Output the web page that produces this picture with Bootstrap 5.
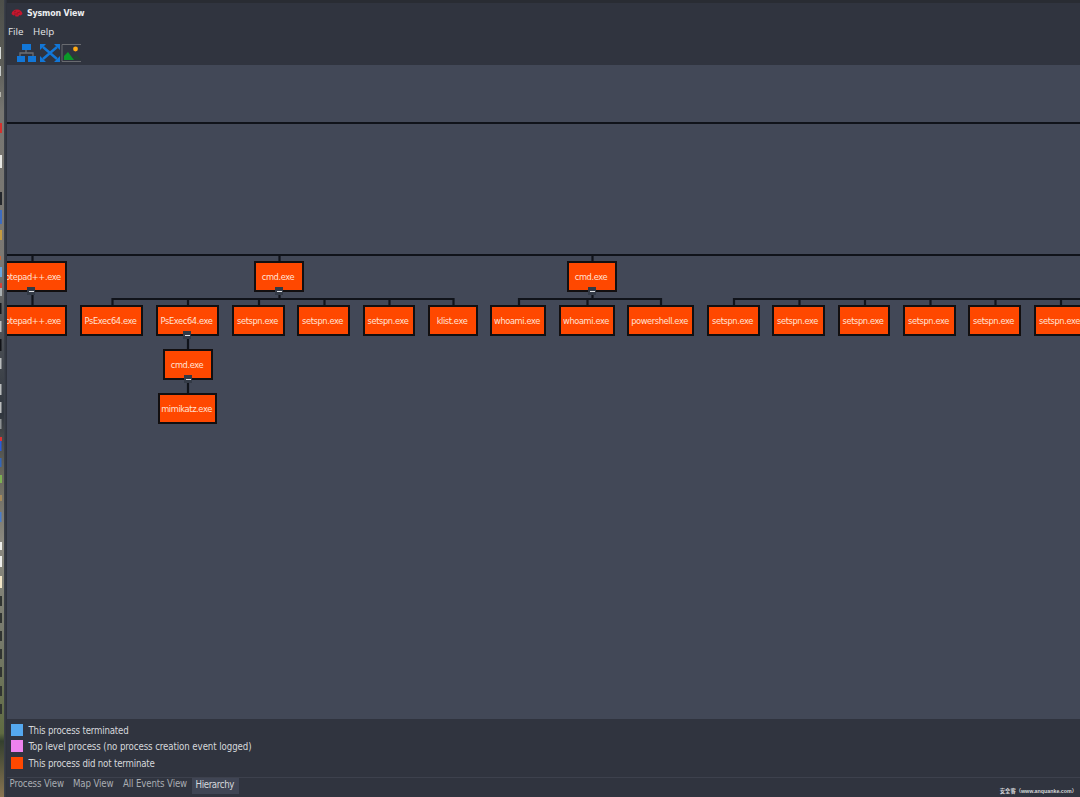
<!DOCTYPE html>
<html lang="en">
<head>
<meta charset="utf-8">
<title>Sysmon View</title>
<link href="https://cdn.jsdelivr.net/npm/bootstrap@5.3.0/dist/css/bootstrap.min.css" rel="stylesheet">
<style>
body{width:1080px;height:797px;background:#30343f;color:#d6d8dc;font-family:"DejaVu Sans Condensed","DejaVu Sans",sans-serif;font-stretch:condensed;font-size:9.6px;line-height:1}
.desk{width:4px;flex:none}
.edge{width:3px;flex:none;background:linear-gradient(90deg,#3d424b,#2b2f39)}
.app-title{height:22px;border-top:3px solid #292c33;font-weight:700;font-size:8.8px;letter-spacing:-.15px;color:#eceef0;padding-left:4px}
.ttl{margin-left:4px;padding-top:2px}
.menus{height:19px;font-family:"Open Sans","Noto Sans",sans-serif;font-size:9.8px;color:#e4e6e9;font-stretch:normal}
.tools{height:24px;padding-left:9px}
.canvas{height:654px;background:#424857}
.node{position:absolute;height:31px;border:2px solid #120f10;background:#ff4800;color:#ffe2d6;font-family:"DejaVu Sans",sans-serif;font-stretch:normal;font-size:8.3px;letter-spacing:-.4px;white-space:nowrap;padding:1px 2px 0 0}
.fold{position:absolute;left:50%;bottom:-5px;width:8px;height:8px;margin-left:-4.5px;background:#333a46}
.fold::after{content:"";position:absolute;left:2px;top:4px;width:5px;height:1px;background:#dfe2e5}
.legend-box{height:58px;padding:4.5px 0 0 4px}
.legend-row{height:16.8px;letter-spacing:-.18px}
.lg{padding-top:2px}
.wide{letter-spacing:-.08px}
.swatch{width:12px;height:12px;margin-right:5.5px}
.bottom-tabs{height:20px;border-top:1px solid #3d414d;color:#a9acb2;font-size:9.6px;letter-spacing:-.12px}
.bottom-tabs .on{background:#404554;color:#d6d8dc;height:16px;letter-spacing:-.35px}
.stamp{font:700 5.3px "Liberation Sans","Noto Sans CJK SC",sans-serif;color:#d5d7da;letter-spacing:0;white-space:nowrap}
</style>
<script src="https://cdn.jsdelivr.net/npm/bootstrap@5.3.0/dist/js/bootstrap.bundle.min.js"></script>
</head>
<body class="d-flex overflow-hidden m-0">
<svg class="desk" width="4" height="797" id="desk">
  <defs><linearGradient id="dg" x1="0" y1="0" x2="0" y2="1">
    <stop offset="0" stop-color="#4d4f4a"/><stop offset=".08" stop-color="#5c5d58"/><stop offset=".14" stop-color="#777671"/><stop offset=".33" stop-color="#7b7873"/><stop offset=".42" stop-color="#4c5056"/><stop offset=".52" stop-color="#30363e"/><stop offset=".59" stop-color="#65645a"/><stop offset=".68" stop-color="#8b8980"/><stop offset=".8" stop-color="#777a6c"/><stop offset=".92" stop-color="#606c42"/><stop offset=".93" stop-color="#34402f"/><stop offset="1" stop-color="#8a7552"/>
  </linearGradient></defs>
  <rect width="4" height="797" fill="url(#dg)"/>
</svg>
<div class="edge"></div>
<main class="flex-grow-1 d-flex flex-column overflow-hidden">
  <header class="app-title d-flex align-items-center">
    <svg width="12" height="8" viewBox="0 0 12 8"><path d="M.5 5C1 2 3 .5 6 .5S11 2 11.5 5L9.500 6.500 8 6 7.500 7.500H4.500L4 6 2.500 6.500Z" fill="#c5162e"/><path d="M3 3L5 2M6 4L9 3M3 5H7" stroke="#811523" stroke-width=".7"/></svg>
    <span class="ttl">Sysmon View</span>
  </header>
  <nav class="menus d-flex align-items-center"><span style="padding-left:1px;width:26px">File</span><span>Help</span></nav>
  <div class="tools d-flex align-items-center">
    <svg width="66" height="20" viewBox="0 0 66 20">
      <path d="M10 7V10M4 13V10H17V13" fill="none" stroke="#6c6f75" stroke-width="1.3"/>
      <path d="M6 1h9v6H6zM1 13h8v6H1zM12 13h8v6h-8z" fill="#1277d8"/>
      <path d="M27 4L41 16M41 4L27 16" stroke="#1277d8" stroke-width="2.4"/>
      <path d="M24 1h6L24 7zM44 1h-6l6 6zM24 19h6l-6-6zM44 19h-6l6-6z" fill="#1277d8"/>
      <path d="M65 1.500H46V18.500H65" fill="none" stroke="#696b70"/>
      <path d="M56 16l4-5 5 6z" fill="#244233"/><path d="M48 17v-4l4-4 6 8z" fill="#0a9a28"/><circle cx="59.500" cy="6" r="2.4" fill="#ffa914"/>
    </svg>
  </div>
  <section class="canvas position-relative overflow-hidden" id="graph">
    <svg class="d-block" width="1073" height="654" viewBox="7 65 1073 654">
      <g fill="none" stroke="#10131a" stroke-width="2.2">
        <path d="M7 123H1080M7 255H1080M32.500 255v50M279.500 255v44M592.500 255v44"/>
        <path d="M112.500 305V299H453.500V305M188 299V400M259 299v6M324.500 299v6M389.500 299v6"/>
        <path d="M519 305V299H661V305M587.500 299v6"/>
        <path d="M734 305V299H1080M799.500 299v6M865 299v6M930.500 299v6M995.500 299v6M1061 299v6"/>
      </g>
    </svg>
  </section>
  <section class="legend-box">
    <div class="legend-row d-flex align-items-start"><i class="swatch" style="background:#55a8ee"></i><span class="lg">This process terminated</span></div>
    <div class="legend-row d-flex align-items-start"><i class="swatch" style="background:#ee82ee"></i><span class="lg wide">Top level process (no process creation event logged)</span></div>
    <div class="legend-row d-flex align-items-start"><i class="swatch" style="background:#ff4800"></i><span class="lg">This process did not terminate</span></div>
  </section>
  <footer class="bottom-tabs d-flex">
    <span style="padding:1px 0 0 2.500px;width:66px">Process View</span><span style="padding-top:1px;width:50px">Map View</span><span style="padding-top:1px;width:69px">All Events View</span>
    <span class="on" style="padding:2px 0 0 4px;width:47px;margin-left:-.5px">Hierarchy</span>
    <span class="stamp ms-auto" style="padding:9px 3px 0 0">安全客（www.anquanke.com）</span>
  </footer>
</main>
<script>
// [label, left, top, width, has fold handle]
const nodes=[
["notepad++.exe",-4,261,71,1],["cmd.exe",254,261,50,1],["cmd.exe",567,261,50,1],
["notepad++.exe",-4,305,71],["PsExec64.exe",80,305,63],["PsExec64.exe",156,305,63,1],
["setspn.exe",232,305,53],["setspn.exe",297,305,53],["setspn.exe",363,305,52],["klist.exe",428,305,50],
["whoami.exe",490,305,56],["whoami.exe",559,305,56],["powershell.exe",627,305,67],
["setspn.exe",707,305,53],["setspn.exe",772,305,53],["setspn.exe",838,305,52],["setspn.exe",903,305,53],["setspn.exe",968,305,53],["setspn.exe",1034,305,53],
["cmd.exe",163,349,50,1],["mimikatz.exe",158,393,59]];
const g=document.getElementById("graph");
for(const [t,x,y,w,f] of nodes){
  const d=document.createElement("div");
  d.className="node d-flex align-items-center justify-content-center";
  d.style.cssText=`left:${x-7}px;top:${y-65}px;width:${w}px`;
  d.innerHTML=`<span>${t}</span>`+(f?'<i class="fold"></i>':"");
  g.append(d);
}
// desktop icons peeking out at the window's left edge: [y, height, colour, width]
const bits=[[47,12,"#d8dcda",1],[66,10,"#c9ccca",1],[92,5,"#b5b5ad",1],[123,10,"#d3322f",2],[155,13,"#e8e8e4",2],[192,13,"#24272c",2],[210,14,"#3e6cc0",2],[230,10,"#c59b3f",2],[256,4,"#c8643a",1],[267,10,"#6aa6e0",2],[283,5,"#d0423a",2],[288,8,"#a9b0b2",2],[303,11,"#15171b",1.5],[321,11,"#b9bcbd",1.5],[339,12,"#111317",1.5],[358,11,"#b9bcbd",1.5],[384,11,"#b9bcbd",1.5],[402,11,"#b9bcbd",1.5],[419,10,"#8d9193",1.5],[437,4,"#dc3434",2],[441,10,"#2b5cd8",1.5],[458,9,"#3566b8",1.5],[475,8,"#7db052",2],[495,6,"#a68a5c",2],[512,10,"#4a7cc9",1.5],[542,8,"#efefec",2],[556,11,"#efefec",2],[576,12,"#f3e6c8",2],[596,10,"#303431",2],[613,10,"#303431",2],[631,10,"#303431",2],[649,10,"#303431",2],[667,10,"#303431",2],[686,10,"#303431",2],[704,10,"#303431",2]];
document.getElementById("desk").insertAdjacentHTML("beforeend",bits.map(([y,h,c,w])=>`<rect y="${y}" width="${w}" height="${h}" fill="${c}"/>`).join(""));
</script>
</body>
</html>
